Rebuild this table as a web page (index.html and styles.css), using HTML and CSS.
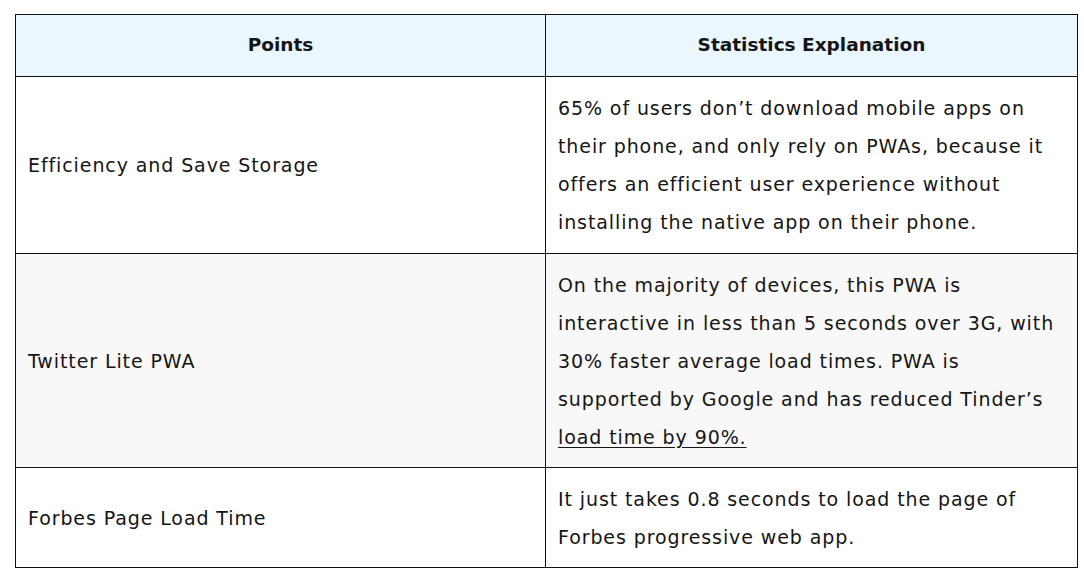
FILE: index.html
```html
<!DOCTYPE html>
<html lang="en">
<head>
<meta charset="utf-8">
<title>PWA Statistics</title>
<link rel="stylesheet" href="styles.css">
</head>
<body>
<table class="stats">
  <thead>
    <tr>
      <th class="col-points">Points</th>
      <th class="col-expl">Statistics Explanation</th>
    </tr>
  </thead>
  <tbody>
    <tr class="first">
      <td>Efficiency and Save Storage</td>
      <td>65% of users don’t download mobile apps on their phone, and only rely on PWAs, because it offers an efficient user experience without installing the native app on their phone.</td>
    </tr>
    <tr class="alt">
      <td>Twitter Lite PWA</td>
      <td>On the majority of devices, this PWA is interactive in less than 5 seconds over 3G, with 30% faster average load times. PWA is supported by Google and has reduced Tinder’s <a href="#" class="link">load time by 90%.</a></td>
    </tr>
    <tr>
      <td>Forbes Page Load Time</td>
      <td>It just takes 0.8 seconds to load the page of Forbes progressive web app.</td>
    </tr>
  </tbody>
</table>
</body>
</html>
```
FILE: styles.css
```css
html, body {
  margin: 0;
  background: #ffffff;
}
body {
  padding: 14px 0 0 15px;
  font-family: "DejaVu Sans", "Noto Sans", sans-serif;
  color: #151515;
}
.stats {
  width: 1063px;
  border-collapse: collapse;
  table-layout: fixed;
  font-size: 19px;
  line-height: 38px;
  letter-spacing: 0.9px;
}
.stats th, .stats td {
  border: 1px solid #111111;
  padding: 12px 12px 11px 12px;
  vertical-align: middle;
  text-align: left;
}
.stats tr.first td { padding-bottom: 12px; }
.stats th {
  background: #ebf7fe;
  font-weight: 700;
  font-size: 18.5px;
  letter-spacing: 0;
  text-align: center;
  padding-top: 11px;
  padding-bottom: 12px;
}
.col-points { width: 505px; }
.stats td:first-child { padding-left: 12px; }
.stats tr.alt td { background: #f8f8f8; }
.link {
  color: inherit;
  text-decoration: underline;
  text-underline-offset: 3px;
}
```
